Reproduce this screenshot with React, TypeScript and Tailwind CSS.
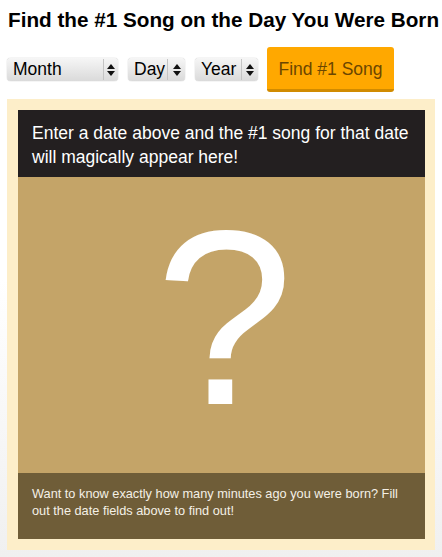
import React from "react";

function FakeSelect({ label, width, textWidth }: { label: string; width: string; textWidth: string }) {
  return (
    <div
      className={`flex h-[23px] items-stretch rounded-[4px] bg-gradient-to-b from-[#f6f6f6] via-[#e8e8e8] to-[#dadada] shadow-[0_0_1px_rgba(0,0,0,0.4)] ${width}`}
    >
      <div className={`flex items-center pl-[6px] text-[17.5px] leading-none text-black ${textWidth}`}>{label}</div>
      <div className="my-[1px] w-px bg-[#c4c4c4]" />
      <div className="flex flex-1 flex-col items-center justify-center gap-[2px]">
        <svg width="8" height="5" viewBox="0 0 8 5"><path d="M4 0 L8 5 L0 5 Z" fill="#111" /></svg>
        <svg width="8" height="5" viewBox="0 0 8 5"><path d="M0 0 L8 0 L4 5 Z" fill="#111" /></svg>
      </div>
    </div>
  );
}

export default function App() {
  return (
    <div
      className="min-h-[557px] w-[442px] bg-gradient-to-b from-white via-white to-[#f0f0f0] pt-[8px]"
      style={{ fontFamily: '"Liberation Sans", Arial, Helvetica, sans-serif' }}
    >
      <h1 className="whitespace-nowrap pl-[8px] text-[20.7px] font-bold leading-[24px] text-black">
        Find the #1 Song on the Day You Were Born
      </h1>
      <div className="mt-[15px] flex items-center pl-[7px]">
        <FakeSelect label="Month" width="w-[111px]" textWidth="w-[96px]" />
        <div className="w-[10px]" />
        <FakeSelect label="Day" width="w-[57px]" textWidth="w-[39px]" />
        <div className="w-[10px]" />
        <FakeSelect label="Year" width="w-[63px]" textWidth="w-[46px]" />
        <div className="w-[9px]" />
        <button className="h-[45px] w-[127px] rounded-[3px] border-b-[3px] border-[#d18b00] bg-[#ffa800] pt-[2px] text-[17.5px] text-[#6b4600]">
          Find #1 Song
        </button>
      </div>
      <div className="mx-[7px] mt-[7px] bg-[#fdeec9] p-[11px] pr-[10px]">
        <div className="h-[67px] bg-[#231f20] pl-[14px] pr-[4px] pt-[11px] text-[17.5px] leading-[24px] text-white">
          Enter a date above and the #1 song for that date will magically appear here!
        </div>
        <div className="flex h-[296px] items-center justify-center bg-[#c4a468]">
          <span className="-mt-[14px] pl-[6px] text-[248px] leading-none text-white">?</span>
        </div>
        <div className="h-[66px] bg-[#6f5d38] px-[14px] pt-[12px] text-[12.75px] leading-[17px] text-[#f4f0e6]">
          Want to know exactly how many minutes ago you were born? Fill out the date fields above to find out!
        </div>
      </div>
    </div>
  );
}
